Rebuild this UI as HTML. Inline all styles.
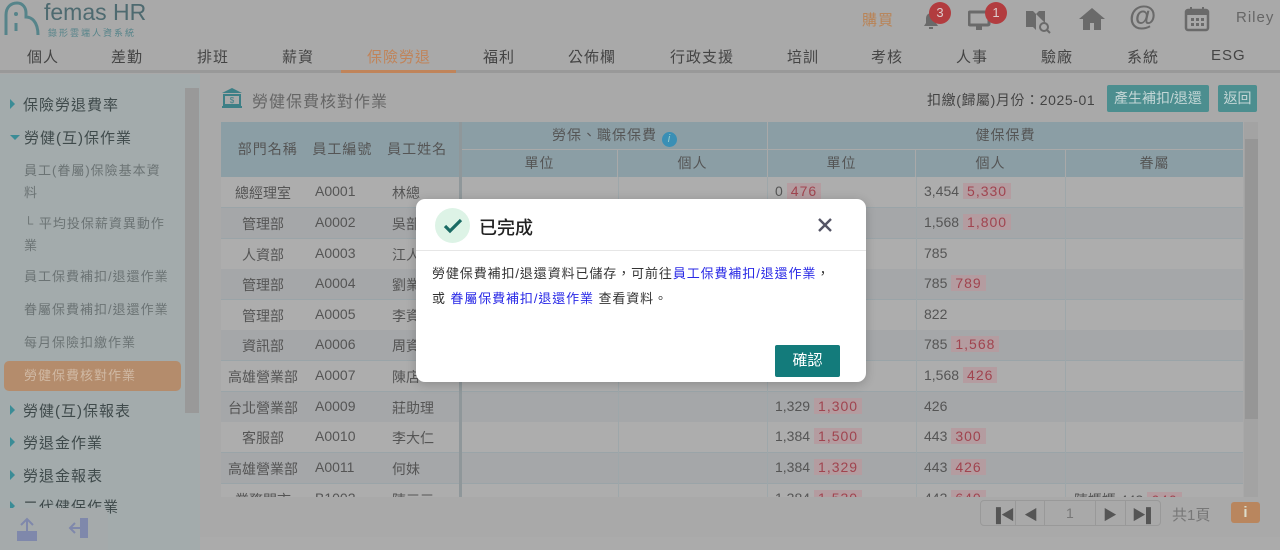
<!DOCTYPE html>
<html><head><meta charset="utf-8"><style>
*{margin:0;padding:0;box-sizing:border-box}
body{width:1280px;height:550px;overflow:hidden;background:#a9a9a9;font-family:"Liberation Sans","Noto Sans CJK TC",sans-serif;color:#555;position:relative}
.a{position:absolute;white-space:nowrap}
.nav span{position:absolute;top:46px;font-size:15px;color:#444;letter-spacing:1px}
.side{position:absolute;left:0;top:74px;width:200px;height:476px;background:#a3abac}
.si{position:absolute;left:10px;font-size:15px;color:#3f4a4b;letter-spacing:1px}
.si b{display:inline-block;width:0;height:0;border-top:5px solid transparent;border-bottom:5px solid transparent;border-left:5px solid #3b8c96;margin-right:8px;vertical-align:1px}
.sub{position:absolute;left:24px;font-size:13px;color:#6b7374;letter-spacing:1px;line-height:22px}
.th{position:absolute;background:#8b9ea5;color:#555;font-size:14px;text-align:center;letter-spacing:1px}
.row{position:absolute;left:221px;width:1022px;height:31px;border-bottom:1px solid #9aa4a8;font-size:14px}
.row div{position:absolute;top:6px}
.r{display:inline-block;background:#b49ca0;color:#a0444f;padding:0 4px;margin-left:4px;letter-spacing:1px}
.vl{position:absolute;top:177px;height:320px;width:1px;background:#9ea7aa}
</style></head><body>
<svg class="a" style="left:2px;top:1px" width="40" height="36" viewBox="0 0 40 36"><path d="M4 34V14c0-8 5-12 11-12s9 5 9 10v4c5 0 12 4 12 18" fill="none" stroke="#56848a" stroke-width="3"/><circle cx="14" cy="13" r="2" fill="#56848a"/><path d="M14 22v8" stroke="#56848a" stroke-width="3"/></svg>
<div class="a" style="left:44px;top:-1px;font-size:23px;color:#4e6a70">femas HR</div>
<div class="a" style="left:48px;top:26px;font-size:9px;color:#56848a;letter-spacing:2px">錄形雲端人資系統</div>
<div class="a" style="left:862px;top:9px;font-size:15px;color:#b98356;letter-spacing:1px">購買</div>
<svg class="a" style="left:919px;top:8px" width="24" height="24" viewBox="0 0 24 24"><path d="M5 18h14l-2-3V10a5 5 0 0 0-10 0v5z" fill="#6a6a6a"/><rect x="10" y="19" width="4" height="2" fill="#6a6a6a"/></svg>
<div class="a" style="left:929px;top:2px;width:22px;height:22px;border-radius:50%;background:#b23c3f;color:#dcc;font-size:13px;text-align:center;line-height:22px">3</div>
<svg class="a" style="left:968px;top:10px" width="26" height="22" viewBox="0 0 26 22"><rect x="1" y="2" width="20" height="13" rx="1" fill="none" stroke="#6a6a6a" stroke-width="3"/><rect x="8" y="16" width="6" height="4" fill="#6a6a6a"/></svg>
<div class="a" style="left:985px;top:2px;width:22px;height:22px;border-radius:50%;background:#b23c3f;color:#dcc;font-size:13px;text-align:center;line-height:22px">1</div>
<svg class="a" style="left:1024px;top:9px" width="28" height="26" viewBox="0 0 28 26"><path d="M2 2h7l3 3v16l-3-3H2zM12 5l3-3h6v12" fill="#6a6a6a"/><circle cx="20" cy="18" r="4" fill="none" stroke="#6a6a6a" stroke-width="2"/><path d="M23 21l3 3" stroke="#6a6a6a" stroke-width="2"/></svg>
<svg class="a" style="left:1078px;top:7px" width="28" height="24" viewBox="0 0 28 24"><path d="M14 1L1 12h4v11h7v-7h4v7h7V12h4z" fill="#6a6a6a"/></svg>
<div class="a" style="left:1129px;top:0px;font-size:28px;font-weight:bold;color:#6a6a6a">@</div>
<svg class="a" style="left:1184px;top:6px" width="26" height="26" viewBox="0 0 26 26"><rect x="2" y="4" width="22" height="20" rx="2" fill="none" stroke="#6a6a6a" stroke-width="2.5"/><rect x="2" y="4" width="22" height="5" fill="#6a6a6a"/><path d="M7 1v5M19 1v5" stroke="#6a6a6a" stroke-width="2"/><g fill="#6a6a6a"><rect x="7" y="12" width="3" height="3"/><rect x="12" y="12" width="3" height="3"/><rect x="17" y="12" width="3" height="3"/><rect x="7" y="17" width="3" height="3"/><rect x="12" y="17" width="3" height="3"/><rect x="17" y="17" width="3" height="3"/></g></svg>
<div class="a" style="left:1236px;top:9px;font-size:15px;color:#666;letter-spacing:1px">Riley</div>
<div class="nav">
<span style="left:27px">個人</span><span style="left:111px">差勤</span><span style="left:197px">排班</span><span style="left:282px">薪資</span><span style="left:367px;color:#c0845a">保險勞退</span><span style="left:483px">福利</span><span style="left:568px">公佈欄</span><span style="left:670px">行政支援</span><span style="left:787px">培訓</span><span style="left:871px">考核</span><span style="left:956px">人事</span><span style="left:1041px">驗廠</span><span style="left:1127px">系統</span><span style="left:1211px;top:47px">ESG</span>
</div>
<div class="a" style="left:0;top:70px;width:1280px;height:3px;background:#999"></div>
<div class="a" style="left:341px;top:70px;width:115px;height:3px;background:#c0845a"></div>
<div class="side">
<div class="si" style="top:20px"><b></b>保險勞退費率</div>
<div class="si" style="top:53px"><b style="border-left:5px solid transparent;border-right:5px solid transparent;border-top:5px solid #3b8c96;border-bottom:0;width:0;margin-right:4px;vertical-align:3px"></b>勞健(互)保作業</div>
<div class="sub" style="top:86px">員工(眷屬)保險基本資<br>料</div>
<div class="sub" style="top:139px">└ 平均投保薪資異動作<br>業</div>
<div class="sub" style="top:192px">員工保費補扣/退還作業</div>
<div class="sub" style="top:225px">眷屬保費補扣/退還作業</div>
<div class="sub" style="top:258px">每月保險扣繳作業</div>
<div class="a" style="left:4px;top:287px;width:177px;height:30px;background:#b48c6c;border-radius:5px"></div>
<div class="sub" style="top:291px;color:#d0b9a4">勞健保費核對作業</div>
<div class="si" style="top:326px"><b></b>勞健(互)保報表</div>
<div class="si" style="top:358px"><b></b>勞退金作業</div>
<div class="si" style="top:391px"><b></b>勞退金報表</div>
<div class="si" style="top:422px"><b></b>二代健保作業</div>
<div class="a" style="left:185px;top:14px;width:14px;height:325px;background:#999"></div>
<div class="a" style="left:0;top:434px;width:108px;height:42px;background:#a5aaab;border-radius:0 6px 0 0"></div>
<svg class="a" style="left:16px;top:443px" width="22" height="26" viewBox="0 0 22 26"><rect x="1" y="14" width="20" height="10" fill="#7f88ab"/><path d="M11 2v22M5 8l6-6 6 6" fill="none" stroke="#7f88ab" stroke-width="2"/></svg>
<svg class="a" style="left:68px;top:442px" width="24" height="26" viewBox="0 0 24 26"><rect x="12" y="2" width="8" height="20" fill="#7f88ab"/><path d="M2 12h16M7 7l-5 5 5 5" fill="none" stroke="#7f88ab" stroke-width="2"/></svg>
</div>
<svg class="a" style="left:221px;top:87px" width="22" height="22" viewBox="0 0 22 22"><path d="M11 1L1 6h20z" fill="#3d7f86"/><rect x="3" y="8" width="16" height="10" fill="none" stroke="#3d7f86" stroke-width="2"/><text x="11" y="16" font-size="8" text-anchor="middle" fill="#3d7f86">$</text><rect x="1" y="19" width="20" height="2" fill="#3d7f86"/></svg>
<div class="a" style="left:252px;top:88px;font-size:16px;color:#666;letter-spacing:1px">勞健保費核對作業</div>
<div class="a" style="left:927px;top:90px;font-size:14px;color:#444;letter-spacing:.6px">扣繳(歸屬)月份：2025-01</div>
<div class="a" style="left:1107px;top:85px;width:102px;height:27px;background:#4c8e8f;border-radius:2px;color:#c5d7d7;font-size:14px;line-height:27px;text-align:center">產生補扣/退還</div>
<div class="a" style="left:1218px;top:85px;width:39px;height:27px;background:#4c8e8f;border-radius:2px;color:#c5d7d7;font-size:14px;line-height:27px;text-align:center">返回</div>
<div class="th" style="left:221px;top:122px;width:238px;height:55px;line-height:55px">&nbsp;部門名稱&nbsp;&nbsp;&nbsp;員工編號&nbsp;&nbsp;&nbsp;員工姓名</div>
<div class="th" style="left:462px;top:122px;width:305px;height:27px;line-height:27px">勞保、職保保費 <span style="display:inline-block;width:15px;height:15px;border-radius:50%;background:#3a8fb5;color:#9cc;font-size:11px;line-height:15px;font-style:italic;vertical-align:-2px">i</span></div>
<div class="th" style="left:768px;top:122px;width:475px;height:27px;line-height:27px">健保保費</div>
<div class="th" style="left:462px;top:150px;width:155px;height:27px;line-height:27px">單位</div>
<div class="th" style="left:618px;top:150px;width:149px;height:27px;line-height:27px">個人</div>
<div class="th" style="left:768px;top:150px;width:147px;height:27px;line-height:27px">單位</div>
<div class="th" style="left:916px;top:150px;width:149px;height:27px;line-height:27px">個人</div>
<div class="th" style="left:1066px;top:150px;width:177px;height:27px;line-height:27px">眷屬</div>
<div class="row" style="top:177px;background:#adadad"><div style="left:0;width:84px;text-align:center">總經理室</div><div style="left:94px">A0001</div><div style="left:171px">林總</div><div style="left:554px">0<span class="r">476</span></div><div style="left:703px">3,454<span class="r">5,330</span></div></div>
<div class="row" style="top:208px;background:#a5a7a9"><div style="left:0;width:84px;text-align:center">管理部</div><div style="left:94px">A0002</div><div style="left:171px">吳部</div><div style="left:703px">1,568<span class="r">1,800</span></div></div>
<div class="row" style="top:239px;background:#adadad"><div style="left:0;width:84px;text-align:center">人資部</div><div style="left:94px">A0003</div><div style="left:171px">江人</div><div style="left:703px">785</div></div>
<div class="row" style="top:269px;background:#a5a7a9"><div style="left:0;width:84px;text-align:center">管理部</div><div style="left:94px">A0004</div><div style="left:171px">劉業</div><div style="left:703px">785<span class="r">789</span></div></div>
<div class="row" style="top:300px;background:#adadad"><div style="left:0;width:84px;text-align:center">管理部</div><div style="left:94px">A0005</div><div style="left:171px">李資</div><div style="left:703px">822</div></div>
<div class="row" style="top:330px;background:#a5a7a9"><div style="left:0;width:84px;text-align:center">資訊部</div><div style="left:94px">A0006</div><div style="left:171px">周資</div><div style="left:703px">785<span class="r">1,568</span></div></div>
<div class="row" style="top:361px;background:#adadad"><div style="left:0;width:84px;text-align:center">高雄營業部</div><div style="left:94px">A0007</div><div style="left:171px">陳店</div><div style="left:703px">1,568<span class="r">426</span></div></div>
<div class="row" style="top:392px;background:#a5a7a9"><div style="left:0;width:84px;text-align:center">台北營業部</div><div style="left:94px">A0009</div><div style="left:171px">莊助理</div><div style="left:554px">1,329<span class="r">1,300</span></div><div style="left:703px">426</div></div>
<div class="row" style="top:422px;background:#adadad"><div style="left:0;width:84px;text-align:center">客服部</div><div style="left:94px">A0010</div><div style="left:171px">李大仁</div><div style="left:554px">1,384<span class="r">1,500</span></div><div style="left:703px">443<span class="r">300</span></div></div>
<div class="row" style="top:453px;background:#a5a7a9"><div style="left:0;width:84px;text-align:center">高雄營業部</div><div style="left:94px">A0011</div><div style="left:171px">何妹</div><div style="left:554px">1,384<span class="r">1,329</span></div><div style="left:703px">443<span class="r">426</span></div></div>
<div class="row" style="top:484px;height:13px;overflow:hidden;background:#adadad;border:0"><div style="left:0;width:84px;text-align:center">業務門市</div><div style="left:94px">B1002</div><div style="left:171px">陳三三</div><div style="left:554px">1,384<span class="r">1,530</span></div><div style="left:703px">443<span class="r">640</span></div><div style="left:853px">陳媽媽 443<span class="r">640</span></div></div>
<div class="a" style="left:459px;top:122px;width:3px;height:375px;background:#8f979a"></div>
<div class="vl" style="left:618px"></div><div class="vl" style="left:767px"></div><div class="vl" style="left:916px"></div><div class="vl" style="left:1065px"></div>
<div class="a" style="left:1244px;top:122px;width:14px;height:375px;background:#a3a3a3"></div>
<div class="a" style="left:1245px;top:139px;width:13px;height:280px;background:#969696"></div>
<div class="a" style="left:980px;top:500px;width:181px;height:26px;border:1px solid #999;border-radius:4px;background:#a9a9a9"></div>
<div class="a" style="left:1015px;top:500px;width:1px;height:26px;background:#999"></div><div class="a" style="left:1044px;top:500px;width:1px;height:26px;background:#999"></div><div class="a" style="left:1095px;top:500px;width:1px;height:26px;background:#999"></div><div class="a" style="left:1125px;top:500px;width:1px;height:26px;background:#999"></div>
<div class="a" style="left:991px;top:505px;font-size:14px;color:#555">▐◀</div>
<div class="a" style="left:1024px;top:505px;font-size:14px;color:#555">◀</div>
<div class="a" style="left:1066px;top:505px;font-size:14px;color:#777">1</div>
<div class="a" style="left:1103px;top:505px;font-size:14px;color:#555">▶</div>
<div class="a" style="left:1132px;top:505px;font-size:14px;color:#555">▶▌</div>
<div class="a" style="left:1172px;top:504px;font-size:15px;color:#777">共1頁</div>
<div class="a" style="left:1231px;top:502px;width:29px;height:21px;background:#b9865e;border-radius:3px;color:#ddc;text-align:center;font-weight:bold;font-size:15px;line-height:21px">i</div>
<div class="a" style="left:200px;top:537px;width:1080px;height:13px;background:#ababab"></div>
<div class="a" style="left:416px;top:199px;width:450px;height:183px;background:#fff;border-radius:9px;box-shadow:0 2px 10px rgba(0,0,0,.2)"></div>
<div class="a" style="left:416px;top:250px;width:450px;height:1px;background:#e6e6e6"></div>
<div class="a" style="left:435px;top:208px;width:35px;height:35px;border-radius:50%;background:#ddf3e6"></div>
<svg class="a" style="left:441px;top:214px" width="24" height="24" viewBox="0 0 24 24"><path d="M4 12l5 5L20 6" fill="none" stroke="#1a6b64" stroke-width="3.2"/></svg>
<div class="a" style="left:479px;top:214px;font-size:18px;color:#222;font-weight:500">已完成</div>
<svg class="a" style="left:817px;top:217px" width="16" height="16" viewBox="0 0 16 16"><path d="M2 2l12 12M14 2L2 14" stroke="#556" stroke-width="2.4"/></svg>
<div class="a" style="left:432px;top:263px;font-size:13px;color:#333;letter-spacing:.9px">勞健保費補扣/退還資料已儲存，可前往<span style="color:#2929e6">員工保費補扣/退還作業</span>，</div>
<div class="a" style="left:432px;top:288px;font-size:13px;color:#333;letter-spacing:.9px">或 <span style="color:#2929e6">眷屬保費補扣/退還作業</span> 查看資料。</div>
<div class="a" style="left:775px;top:345px;width:65px;height:32px;background:#137b7b;border-radius:2px;color:#fff;font-size:15px;text-align:center;line-height:32px">確認</div>
</body></html>
